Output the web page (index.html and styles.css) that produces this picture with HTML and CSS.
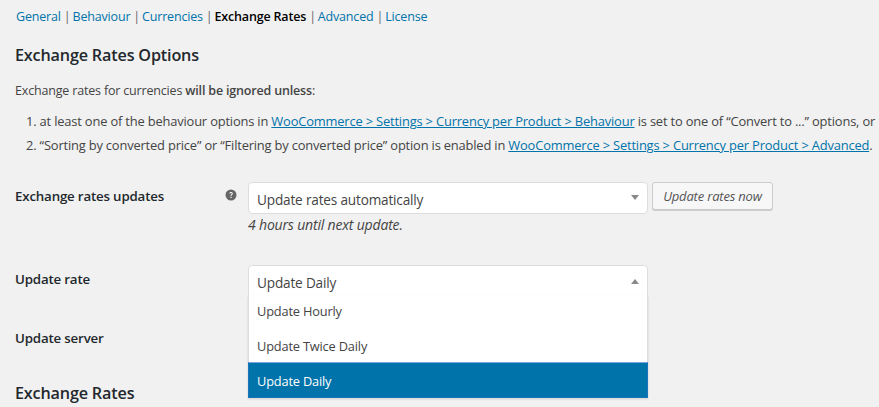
FILE: index.html
```html
<!DOCTYPE html>
<html lang="en">
<head>
    <meta charset="UTF-8">
    <title>Exchange Rates</title>
    <link rel="stylesheet" href="styles.css">
</head>
<body>
    <div class="wrap">
        <ul class="tabs">
            <li><a href="#">General</a></li>
            <li><a href="#">Behaviour</a></li>
            <li><a href="#">Currencies</a></li>
            <li class="current">Exchange Rates</li>
            <li><a href="#">Advanced</a></li>
            <li><a href="#">License</a></li>
        </ul>

        <h2 class="title">Exchange Rates Options</h2>
        <p class="intro">Exchange rates for currencies <b>will be ignored unless</b>:</p>
        <ol class="rules">
            <li>at least one of the behaviour options in <a href="#">WooCommerce &gt; Settings &gt; Currency per Product &gt; Behaviour</a> is set to one of “Convert to ...” options, or</li>
            <li>“Sorting by converted price” or “Filtering by converted price” option is enabled in <a href="#">WooCommerce &gt; Settings &gt; Currency per Product &gt; Advanced</a>.</li>
        </ol>

        <div class="row row-updates">
            <div class="label">Exchange rates updates</div>
            <div class="tip">
                <svg width="12" height="12" viewBox="0 0 12 12"><circle cx="6" cy="6" r="5.5" fill="#666"/><path d="M4.2 4.6c0-1 .8-1.6 1.8-1.6s1.9.6 1.9 1.6c0 1.3-1.4 1.3-1.4 2.4H5.5c0-1.6 1.3-1.6 1.3-2.4 0-.4-.3-.7-.8-.7s-.8.3-.8.7z" fill="#f1f1f1"/><rect x="5.4" y="7.7" width="1.2" height="1.3" fill="#f1f1f1"/></svg>
            </div>
            <div class="field">
                <div class="field-line">
                    <div class="select">
                        <span>Update rates automatically</span>
                        <i class="arrow"></i>
                    </div>
                    <button class="btn" type="button">Update rates now</button>
                </div>
                <p class="desc">4 hours until next update.</p>
            </div>
        </div>

        <div class="row row-rate">
            <div class="label">Update rate</div>
            <div class="tip"></div>
            <div class="field">
                <div class="select open">
                    <span>Update Daily</span>
                    <i class="arrow up"></i>
                    <ul class="options">
                        <li>Update Hourly</li>
                        <li class="second">Update Twice Daily</li>
                        <li class="active">Update Daily</li>
                    </ul>
                </div>
            </div>
        </div>

        <div class="row row-server">
            <div class="label">Update server</div>
        </div>

        <h2 class="title title-rates">Exchange Rates</h2>
    </div>
</body>
</html>
```

FILE: styles.css
```css
*{margin: 0; padding: 0; box-sizing: border-box;}
html, body{
    height: 100%;
    overflow: hidden;
}
body{
    background-color: #f1f1f1;
    color: #444;
    font-family: "Open Sans", sans-serif;
    font-size: 12.5px;
    letter-spacing: -0.014em;
    line-height: 19px;
}
li{list-style: none;}
a{color: #0073aa;}

.wrap{
    padding: 7px 0 0 15px;
    white-space: nowrap;
}

/* tabs */
.tabs{
    display: flex;
    padding-left: 1px;
    height: 19px;
    color: #666;
}
.tabs a{text-decoration: none;}
.tabs li + li::before{
    content: "|";
    margin: 0 2px 0 3px;
}
.tabs .current{
    color: #000;
    font-weight: 600;
}
.tabs .current::before{
    font-weight: 400;
    color: #666;
}

.title{
    color: #23282d;
    font-size: 16.2px;
    font-weight: 600;
    line-height: 22px;
    margin-top: 18px;
}
.intro{margin-top: 15px;}
.intro b{font-weight: 600;}

.rules{
    margin: 12px 0 0 11px;
    font-size: 12.9px;
}
.rules li{
    list-style: none;
    counter-increment: rule;
    margin-bottom: 5px;
}
.rules li::before{
    content: counter(rule) ". ";
}

/* form rows */
.row{display: flex;}
.label{
    width: 210px;
    color: #23282d;
    font-size: 13.3px;
    font-weight: 600;
}
.tip{width: 23px;}
.tip svg{display: block;}
.row-updates{margin-top: 27px;}
.row-updates .label{padding-top: 5px;}
.row-updates .tip{padding-top: 7px;}
.row-rate{margin-top: 31px;}
.row-rate .label{padding-top: 5px;}
.row-server{margin-top: 32px;}

.field-line{
    display: flex;
    align-items: flex-start;
    gap: 4px;
}
.select{
    position: relative;
    width: 400px;
    height: 32px;
    padding: 7px 8px 0;
    background-color: #fff;
    border: 1px solid #ddd;
    border-radius: 4px;
    color: #444;
    font-size: 13.6px;
    line-height: 20px;
}
.arrow{
    position: absolute;
    top: 12px;
    right: 8px;
    border-top: 5px solid #888;
    border-left: 4px solid transparent;
    border-right: 4px solid transparent;
}
.arrow.up{
    top: 13px;
    border-top: 0;
    border-bottom: 5px solid #888;
}
.btn{
    width: 121px;
    height: 28px;
    background-color: #f7f7f7;
    border: 1px solid #ccc;
    border-radius: 3px;
    box-shadow: 0 1px 0 #ccc;
    color: #555;
    font-family: "Open Sans", sans-serif;
    font-size: 13px;
    font-style: italic;
    letter-spacing: -0.014em;
}
.desc{
    margin-top: 1px;
    font-size: 14px;
    font-style: italic;
}

/* open dropdown */
.select.open{
    border-radius: 4px 4px 0 0;
}
.options{
    position: absolute;
    top: 30px;
    left: -1px;
    width: 400px;
    background-color: #fff;
    border: 1px solid #ddd;
    border-top: 0;
    box-shadow: 0 1px 2px rgba(0,0,0,0.15);
    font-size: 12.8px;
}
.options li{
    height: 31px;
    line-height: 31px;
    padding-left: 8px;
}
.options .second{
    height: 35px;
    padding-top: 4px;
}
.options .active{
    height: 36px;
    line-height: 36px;
    margin: 0 -1px -1px;
    background-color: #0073aa;
    border: 1px solid #1e73be;
    border-top-color: #7aa7e0;
    color: #fff;
}
.title-rates{margin-top: 34px;}
```
